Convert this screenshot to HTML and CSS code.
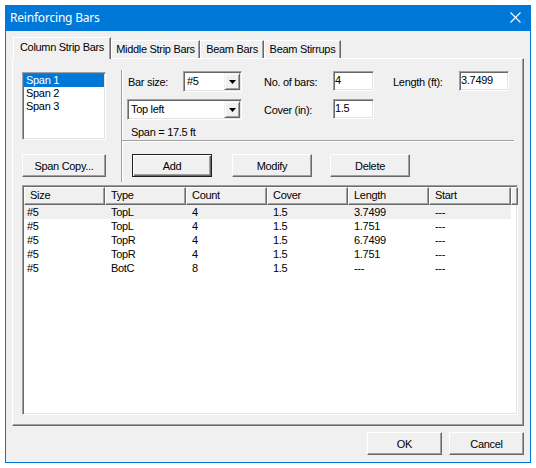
FILE: index.html
```html
<!DOCTYPE html>
<html>
<head>
<meta charset="utf-8">
<title>Reinforcing Bars</title>
<link rel="stylesheet" href="styles.css">
</head>
<body>
<div class="window">
  <div class="titlebar">
    <span class="title">Reinforcing Bars</span>
    <svg class="close" width="11" height="11" viewBox="0 0 11 11"><path d="M0.5 0.5 L10.5 10.5 M10.5 0.5 L0.5 10.5" stroke="#fff" stroke-width="1.1" fill="none"/></svg>
  </div>
  <div class="client">
    <div class="tabs">
      <div class="tab active t1">Column Strip Bars</div>
      <div class="tab t2">Middle Strip Bars</div>
      <div class="tab t3">Beam Bars</div>
      <div class="tab t4">Beam Stirrups</div>
    </div>
    <div class="panel">
      <div class="top">
        <div class="leftcol">
          <div class="listbox">
            <div class="item sel">Span 1</div>
            <div class="item">Span 2</div>
            <div class="item">Span 3</div>
          </div>
          <button class="btn copy">Span Copy...</button>
        </div>
        <div class="rightcol">
          <div class="fields">
            <span class="lbl c1">Bar size:</span>
            <div class="combo c2"><span class="val">#5</span><span class="arrow"><svg width="7" height="4" viewBox="0 0 7 4"><path d="M0 0 H7 L3.5 4 Z" fill="#000"/></svg></span></div>
            <span class="lbl c4">No. of bars:</span>
            <div class="edit c5">4</div>
            <span class="lbl c7">Length (ft):</span>
            <div class="edit c8">3.7499</div>
            <div class="combo r2 c12"><span class="val">Top left</span><span class="arrow"><svg width="7" height="4" viewBox="0 0 7 4"><path d="M0 0 H7 L3.5 4 Z" fill="#000"/></svg></span></div>
            <span class="lbl r2 c4">Cover (in):</span>
            <div class="edit r2 c5">1.5</div>
          </div>
          <div class="spaninfo">Span = 17.5 ft</div>
          <div class="hsep"></div>
          <div class="actions">
            <button class="btn act default">Add</button>
            <button class="btn act modify">Modify</button>
            <button class="btn act delete">Delete</button>
          </div>
        </div>
      </div>
      <div class="listview">
        <div class="lvhead">
          <div class="hc w81">Size</div>
          <div class="hc w81">Type</div>
          <div class="hc w81">Count</div>
          <div class="hc w81">Cover</div>
          <div class="hc w81">Length</div>
          <div class="hc w82">Start</div>
          <div class="hc fill"></div>
        </div>
        <div class="lvrow sel">
          <div class="dc first w81">#5</div><div class="dc w81">TopL</div><div class="dc w81">4</div><div class="dc w81">1.5</div><div class="dc w81">3.7499</div><div class="dc w82">---</div>
        </div>
        <div class="lvrow">
          <div class="dc first w81">#5</div><div class="dc w81">TopL</div><div class="dc w81">4</div><div class="dc w81">1.5</div><div class="dc w81">1.751</div><div class="dc w82">---</div>
        </div>
        <div class="lvrow">
          <div class="dc first w81">#5</div><div class="dc w81">TopR</div><div class="dc w81">4</div><div class="dc w81">1.5</div><div class="dc w81">6.7499</div><div class="dc w82">---</div>
        </div>
        <div class="lvrow">
          <div class="dc first w81">#5</div><div class="dc w81">TopR</div><div class="dc w81">4</div><div class="dc w81">1.5</div><div class="dc w81">1.751</div><div class="dc w82">---</div>
        </div>
        <div class="lvrow">
          <div class="dc first w81">#5</div><div class="dc w81">BotC</div><div class="dc w81">8</div><div class="dc w81">1.5</div><div class="dc w81">---</div><div class="dc w82">---</div>
        </div>
      </div>
    </div>
    <div class="footer">
      <button class="btn foot">OK</button>
      <button class="btn foot">Cancel</button>
    </div>
  </div>
</div>
</body>
</html>
```
FILE: styles.css
```css
* { box-sizing: border-box; }

body {
  margin: 0;
  background: #ffffff;
  font-family: "Liberation Sans", Arial, sans-serif;
  font-size: 11px;
  letter-spacing: -0.3px;
  color: #000;
}

.window {
  margin: 5px 0 0 5px;
  width: 526px;
  height: 458px;
  border: 1px solid #0078d7;
  background: #f0f0f0;
  display: flex;
  flex-direction: column;
}

.titlebar {
  height: 25px;
  flex: none;
  background: #0078d7;
  color: #fff;
  display: flex;
  align-items: center;
  justify-content: space-between;
  padding: 0 9px 2px 4px;
}

.title {
  font-family: "Noto Sans", "Open Sans", sans-serif;
  font-size: 12px;
  letter-spacing: -0.2px;
}

.close { display: block; }

.client {
  flex: 1;
  padding: 6px 6px 0 6px;
}

/* tabs */
.tabs {
  display: flex;
  align-items: flex-end;
  height: 21px;
  padding-left: 1px;
}

.tab {
  height: 18px;
  border: 1px solid;
  border-color: #fff #696969 transparent #fff;
  border-bottom: none;
  box-shadow: inset -1px 0 #a0a0a0;
  text-align: center;
  line-height: 17px;
  white-space: nowrap;
}

.tab.active {
  height: 22px;
  margin-bottom: -1px;
  position: relative;
  z-index: 1;
  background: #f0f0f0;
  line-height: 19px;
}

.t1 { width: 98px; }
.t2 { width: 89px; }
.t3 { width: 64px; }
.t4 { width: 77px; }

/* panel */
.panel {
  width: 512px;
  height: 368px;
  border: 1px solid;
  border-color: #fff #696969 #696969 #fff;
  box-shadow: inset -1px -1px #a0a0a0;
  padding: 12px 0 0 9px;
}

.top { display: flex; }

.leftcol {
  width: 84px;
  margin-top: 1px;
  display: flex;
  flex-direction: column;
}

.listbox,
.edit,
.combo,
.listview {
  border: 1px solid;
  border-color: #a0a0a0 #fff #fff #a0a0a0;
  box-shadow: inset 1px 1px #696969, inset -1px -1px #e3e3e3;
  background: #fff;
}

.listbox {
  height: 68px;
  padding: 1px;
}

.item {
  height: 13px;
  line-height: 13px;
  padding-left: 2px;
}

.item.sel {
  background: #0078d7;
  color: #fff;
}

.btn {
  font: inherit;
  letter-spacing: inherit;
  color: #000;
  background: #f0f0f0;
  border: 1px solid;
  border-color: #fff #696969 #696969 #fff;
  box-shadow: inset -1px -1px #a0a0a0;
  padding: 0;
  height: 23px;
}

.btn.default {
  border-color: #202020;
  box-shadow: inset 1px 1px #fff, inset -1px -1px #696969, inset -2px -2px #a0a0a0;
}

.copy {
  margin-top: 14px;
  width: 84px;
}

.rightcol {
  margin-left: 15px;
  margin-top: -1px;
  padding-top: 1px;
  width: 393px;
  height: 112px;
  border-left: 1px solid #a0a0a0;
  box-shadow: inset 1px 0 #fff;
}

.fields {
  display: grid;
  grid-template-columns: 56px 59px 21px 70px 41px 18px 67px 50px;
  grid-template-rows: 21px 21px;
  row-gap: 7px;
  padding-left: 5px;
}

.lbl { align-self: center; white-space: nowrap; padding-top: 1px; }
.c1 { grid-column: 1; }
.c2 { grid-column: 2; }
.c4 { grid-column: 4; }
.c5 { grid-column: 5; }
.c7 { grid-column: 7; }
.c8 { grid-column: 8; }
.c12 { grid-column: 1 / 3; }
.lbl.c1, .lbl.c4, .lbl.c7 { padding-left: 1px; }
.r2 { grid-row: 2; }

.edit {
  height: 20px;
  line-height: 17px;
  padding: 0 1px;
  align-self: start;
}

.combo {
  height: 21px;
  padding: 1px;
  display: flex;
}

.combo .val {
  flex: 1;
  padding-left: 2px;
  line-height: 17px;
}

.combo .arrow {
  width: 16px;
  height: 17px;
  background: #f0f0f0;
  border: 1px solid;
  border-color: #f0f0f0 #696969 #696969 #f0f0f0;
  box-shadow: inset 1px 1px #fff, inset -1px -1px #a0a0a0;
  display: flex;
  align-items: center;
  justify-content: center;
}

.combo .arrow svg { display: block; }

.spaninfo {
  margin-top: 6px;
  line-height: 13px;
  padding-left: 9px;
}

.hsep {
  margin-top: 1px;
  height: 2px;
  border-top: 1px solid #a0a0a0;
  border-bottom: 1px solid #fff;
}

.actions {
  display: flex;
  margin-top: 12px;
  padding-left: 10px;
}

.act { width: 80px; }
.modify { margin-left: 20px; }
.delete { margin-left: 18px; }

/* list view */
.listview {
  margin-top: 3px;
  width: 496px;
  height: 230px;
  padding: 1px;
}

.lvhead {
  display: flex;
  height: 18px;
}

.hc {
  height: 18px;
  border: 1px solid;
  border-color: #fff #696969 #696969 #fff;
  box-shadow: inset -1px -1px #a0a0a0;
  background: #f0f0f0;
  padding-left: 5px;
  line-height: 15px;
}

.hc.fill { flex: 1; }

.w81 { width: 81px; flex: none; }
.w82 { width: 82px; flex: none; }

.lvrow {
  display: flex;
  width: 487px;
  height: 14px;
  line-height: 14px;
}

.lvrow.sel { background: #f0f0f0; }

.dc { padding-left: 6px; }
.dc.first { padding-left: 3px; }

.footer {
  display: flex;
  justify-content: flex-end;
  gap: 7px;
  margin-top: 6px;
}

.foot { width: 75px; }
```
